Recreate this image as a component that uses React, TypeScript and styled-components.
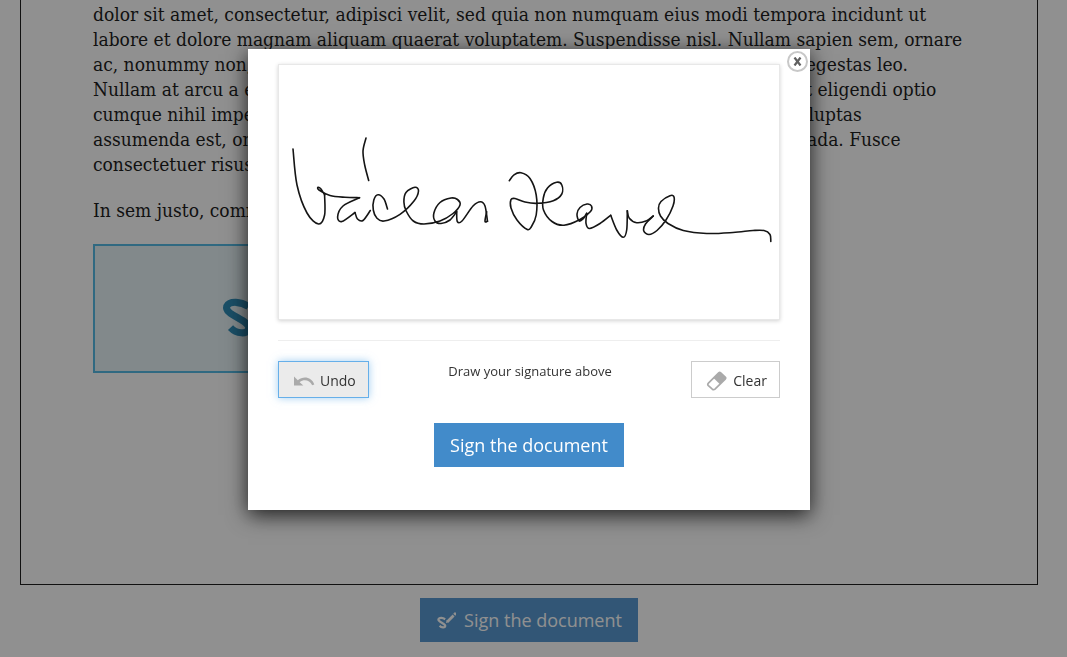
import React from 'react';
import styled, { createGlobalStyle } from 'styled-components';

const GlobalStyle = createGlobalStyle`
  * { box-sizing: border-box; }
  html, body { height: 100%; }
  body {
    margin: 0;
    background: #fff;
    overflow: hidden;
    font-family: "Open Sans", "Noto Sans", sans-serif;
  }
`;

const Page = styled.main`
  display: flex;
  flex-direction: column;
  align-items: center;
  justify-content: flex-end;
  height: 100vh;
  padding: 0 29px 15px 20px;
  gap: 13px;
`;

const Sheet = styled.article`
  flex-shrink: 0;
  width: 100%;
  padding: 0 72px 211px;
  border: 1px solid #000;
  border-top: 0;
  color: #000;
  font: 19px/25px "DejaVu Serif Condensed", "DejaVu Serif", serif;
  font-stretch: condensed;
`;

const Paragraph = styled.p`
  margin: 0 0 21px;
`;

const Line = styled.span`
  display: block;
  white-space: nowrap;
`;

const SignatureField = styled.div`
  display: flex;
  align-items: center;
  width: 440px;
  height: 129px;
  padding: 0 124px;
  border: 2px solid #3fb1e0;
  background: #e3f1f5;
  color: #147dad;
`;

const PrimaryButton = styled.button`
  display: inline-flex;
  flex-shrink: 0;
  align-items: center;
  gap: 8px;
  height: 44px;
  padding: 0 16px;
  border: 0;
  background: #428bca;
  color: #fff;
  font: 18px/24px "Open Sans", sans-serif;
  cursor: pointer;
`;

const Overlay = styled.div`
  position: fixed;
  inset: 0;
  display: flex;
  justify-content: center;
  align-items: flex-start;
  padding: 49px 9px 0 0;
  background: rgba(33, 33, 33, 0.5);
`;

const Dialog = styled.section`
  position: relative;
  display: flex;
  flex-direction: column;
  width: 562px;
  max-width: 100%;
  padding: 15px 30px 43px;
  background: #fff;
  box-shadow: 0 5px 20px rgba(0, 0, 0, 0.8);
`;

const CloseButton = styled.button`
  position: absolute;
  top: 2px;
  right: 2px;
  display: grid;
  place-items: center;
  width: 21px;
  height: 21px;
  padding: 0;
  border: 2px solid #c8c8c8;
  border-radius: 50%;
  background: #fff;
  color: #606060;
  cursor: pointer;
`;

const Canvas = styled.div`
  height: 256px;
  border: 1px solid #e8e8e8;
  box-shadow: 0 1px 4px rgba(0, 0, 0, 0.18);
  svg { display: block; width: 100%; height: 100%; }
`;

const Divider = styled.hr`
  width: 100%;
  margin: 20px 0;
  border: 0;
  border-top: 1px solid #eee;
`;

const Tools = styled.div`
  display: flex;
  justify-content: space-between;
  margin-bottom: 25px;
`;

const Hint = styled.p`
  margin: 0;
  color: #333;
  font-size: 13px;
  line-height: 20px;
`;

const ToolButton = styled.button<{ $active?: boolean }>`
  display: inline-flex;
  align-items: center;
  gap: 5px;
  height: 37px;
  padding: 2px 12px 0 14px;
  border: 1px solid ${(p) => (p.$active ? '#66afe9' : '#ccc')};
  background: ${(p) => (p.$active ? '#ebebeb' : '#fff')};
  box-shadow: ${(p) => (p.$active ? '0 0 8px rgba(102, 175, 233, 0.6)' : 'none')};
  color: #333;
  font: 14px/20px "Open Sans", sans-serif;
  cursor: pointer;
`;

const Submit = styled.div`
  display: flex;
  justify-content: center;
`;

const BrushIcon = ({ size }: { size: number }) => (
  <svg width={size} height={size} viewBox="0 0 20 20" fill="none" stroke="currentColor" aria-hidden="true">
    <path d="M9.200 9.200C6.800 7.700 3.400 7.300 2.400 9.200C1.600 11.900 9.700 13.400 9.300 16.100C8.900 18.200 5.400 17.700 3.600 15.800" strokeWidth="2.200" />
    <path d="M11.600 11.400L17.600 5.400" strokeWidth="2.800" />
    <path d="M18.200 4.800L20 3" strokeWidth="2.800" />
    <path d="M10.600 9.800L10 13L13.200 12.300Z" fill="currentColor" stroke="none" />
  </svg>
);

const UndoIcon = () => (
  <svg width="22" height="20" viewBox="0 0 22 20" aria-hidden="true">
    <path d="M1 5.500V14.500H10.300L6.700 11.200C10.500 8.200 16.500 8.600 19.200 14.300L21.300 13.400C18.500 5.900 10.300 4.700 4.800 9.300Z" fill="#aaa" />
  </svg>
);

const EraserIcon = () => (
  <svg width="22" height="20" viewBox="0 0 22 20" aria-hidden="true">
    <path d="M2.400 12.200L12.700 1.900Q13.700 1 14.700 1.900L19.200 6.100Q20.200 7.100 19.200 8.100L9 18.200Q7.700 19.200 6.300 18.200L2.400 14.600Q1.200 13.400 2.400 12.200Z" fill="#fff" stroke="#aaa" strokeWidth="1.700" />
    <path d="M7.500 7.100L12.700 1.900Q13.700 1 14.700 1.900L19.200 6.100Q20.200 7.100 19.200 8.100L13.900 13.300Z" fill="#aaa" />
  </svg>
);

type Point = [number, number];

// Pen strokes, each split where the pen changes direction sharply.
const STROKES: Point[][] = [
  [[293, 149], [297, 185], [307, 213], [318.6, 224], [324.6, 215], [324.6, 195]],
  [[324.6, 195], [321, 189], [318, 187.300], [319, 190], [330, 195.500], [345, 197.300], [359.5, 197.700]],
  [[359.5, 197.7], [343, 206], [337.6, 217], [341.900, 221.500], [355, 212.500]],
  [[355, 212.5], [357.500, 219], [363, 220.500], [370.3, 210.500]],
  [[366, 138], [363, 151], [364.700, 165], [368.700, 180.500]],
  [[387.5, 209], [384, 199], [378, 194.700], [373.800, 200], [373.3, 210], [376.800, 218], [384, 221], [400, 214.3], [414, 201], [418.500, 191], [415, 187.3], [406, 192.500], [403.900, 202], [406.2, 211], [413.3, 221], [424, 224], [440, 221], [453, 213.500], [460, 205], [457.500, 199.500], [451, 198], [440, 202.500], [433.900, 213], [435, 221], [441, 223.500], [450, 220], [456.7, 211.7]],
  [[456.7, 211.7], [457.3, 221.500], [462, 221], [473, 206], [480.500, 201.7], [485, 206], [487.500, 221.3]],
  [[487.5, 221.3], [485, 221.3], [486.7, 211.7]],
  [[509.3, 180.7], [514, 174.800], [521, 172.800], [530, 178.500], [536.2, 195], [536.2, 215], [531.500, 226.500], [527.3, 229.500], [517, 220], [511, 208], [511, 199.500], [515, 198.500], [525, 202], [537, 203.3], [553.3, 200.700], [561.800, 194], [561.800, 185], [556.7, 182.3], [547.500, 188], [543.300, 198], [543.500, 210], [552, 221.500], [564, 225.200], [580, 219.500], [590.500, 211.500], [591.500, 206], [587, 204], [580, 207.500], [577, 214], [579, 221], [583, 219], [586.7, 213.3]],
  [[586.7, 213.3], [586, 223.3], [589.500, 228.5], [600, 223.500], [610.7, 215.3]],
  [[610.7, 215.3], [616.7, 230], [623.3, 237.3], [626.7, 230], [627.3, 210.7]],
  [[627.3, 210.7], [629.3, 218.3], [636.7, 222.7], [646.7, 220.7], [653.3, 216]],
  [[653.3, 216], [645.500, 224], [643.800, 231], [649, 234.500], [657, 230.500], [666, 220], [673, 206], [674, 197], [670, 195.700], [661, 201.500], [658.500, 208], [660.500, 216], [668, 223.5], [683.3, 230.500], [706.7, 233.5], [733, 232.5], [753, 230.500], [764, 230.500], [770, 234.500], [770.8, 241.5]],
];

// Catmull-Rom interpolation, written out as cubic curves.
const toPath = (pts: Point[]) =>
  pts.slice(1).reduce((d, p, i) => {
    const prev = pts[Math.max(i - 1, 0)];
    const from = pts[i];
    const next = pts[Math.min(i + 2, pts.length - 1)];
    const c1 = [from[0] + (p[0] - prev[0]) / 6, from[1] + (p[1] - prev[1]) / 6];
    const c2 = [p[0] - (next[0] - from[0]) / 6, p[1] - (next[1] - from[1]) / 6];
    return `${d}C${c1} ${c2} ${p}`;
  }, `M${pts[0]}`);

const SignatureDrawing = () => (
  <svg viewBox="279 65 500 254" fill="none" stroke="#151515" strokeWidth="1.600" strokeLinecap="round" strokeLinejoin="round" role="img" aria-label="Handwritten signature">
    {STROKES.map((points, i) => (
      <path key={i} d={toPath(points)} />
    ))}
  </svg>
);

const LINES = [
  'Aenean fermentum risus id sapien tortor et nulla. Neque porro quisquam est, qui dolorem ipsum quia',
  'dolor sit amet, consectetur, adipisci velit, sed quia non numquam eius modi tempora incidunt ut',
  'labore et dolore magnam aliquam quaerat voluptatem. Suspendisse nisl. Nullam sapien sem, ornare',
  'ac, nonummy non, lobortis a enim. Nunc tincidunt ante vitae massa. Maecenas et egestas leo.',
  'Nullam at arcu a est sollicitudin euismod. Nam libero tempor, cum soluta nobis est eligendi optio',
  'cumque nihil impedit quo minus id quod maxima placet facere possimus, omnis voluptas',
  'assumenda est, omnis dolor repellendus. Nullam faucibus mi velit. Integer malesuada. Fusce',
  'consectetuer risus a nunc.',
];

export default function App() {
  return (
    <>
      <GlobalStyle />
      <Page>
        <Sheet>
          <Paragraph>
            {LINES.map((line) => (
              <Line key={line}>{line}</Line>
            ))}
          </Paragraph>
          <Paragraph>In sem justo, commodo ut, suscipit at, pharetra vitae, orci.</Paragraph>
          <SignatureField>
            <BrushIcon size={64} />
          </SignatureField>
        </Sheet>
        <PrimaryButton type="button">
          <BrushIcon size={20} />
          Sign the document
        </PrimaryButton>
      </Page>
      <Overlay>
        <Dialog role="dialog" aria-modal="true" aria-label="Sign the document">
          <CloseButton type="button" aria-label="Close">
            <svg width="9" height="9" viewBox="0 0 9 9" stroke="currentColor" strokeWidth="2.200" aria-hidden="true">
              <path d="M1.500 0.500L7.500 8.500M7.500 0.500L1.500 8.500" />
            </svg>
          </CloseButton>
          <Canvas>
            <SignatureDrawing />
          </Canvas>
          <Divider />
          <Tools>
            <ToolButton type="button" $active>
              <UndoIcon />
              Undo
            </ToolButton>
            <Hint>Draw your signature above</Hint>
            <ToolButton type="button">
              <EraserIcon />
              Clear
            </ToolButton>
          </Tools>
          <Submit>
            <PrimaryButton type="button">Sign the document</PrimaryButton>
          </Submit>
        </Dialog>
      </Overlay>
    </>
  );
}
